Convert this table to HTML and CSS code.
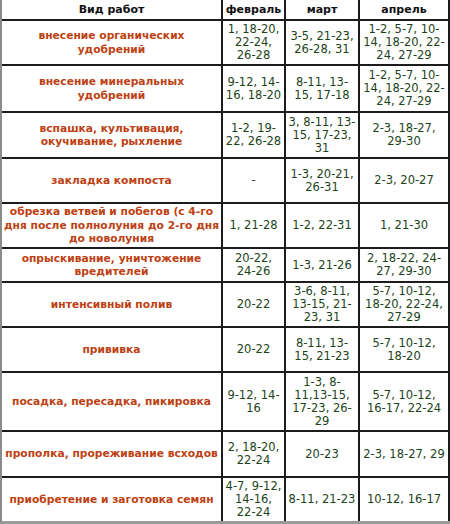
FILE: index.html
```html
<!DOCTYPE html>
<html lang="ru">
<head>
<meta charset="utf-8">
<title>Календарь работ</title>
<link rel="stylesheet" href="styles.css">
</head>
<body>
<div class="sheet">
  <div class="grid">
    <div class="cell head">Вид работ</div>
    <div class="cell head">февраль</div>
    <div class="cell head">март</div>
    <div class="cell head">апрель</div>

    <div class="cell work r1">внесение органических<br>удобрений</div>
    <div class="cell date">1, 18-20,<br>22-24,<br>26-28</div>
    <div class="cell date">3-5, 21-23,<br>26-28, 31</div>
    <div class="cell date">1-2, 5-7, 10-<br>14, 18-20, 22-<br>24, 27-29</div>

    <div class="cell work">внесение минеральных<br>удобрений</div>
    <div class="cell date">9-12, 14-<br>16, 18-20</div>
    <div class="cell date">8-11, 13-<br>15, 17-18</div>
    <div class="cell date">1-2, 5-7, 10-<br>14, 18-20, 22-<br>24, 27-29</div>

    <div class="cell work">вспашка, культивация,<br>окучивание, рыхление</div>
    <div class="cell date">1-2, 19-<br>22, 26-28</div>
    <div class="cell date">3, 8-11, 13-<br>15, 17-23,<br>31</div>
    <div class="cell date">2-3, 18-27,<br>29-30</div>

    <div class="cell work">закладка компоста</div>
    <div class="cell date">-</div>
    <div class="cell date">1-3, 20-21,<br>26-31</div>
    <div class="cell date">2-3, 20-27</div>

    <div class="cell work">обрезка ветвей и побегов (с 4-го<br>дня после полнолуния до 2-го дня<br>до новолуния</div>
    <div class="cell date">1, 21-28</div>
    <div class="cell date">1-2, 22-31</div>
    <div class="cell date">1, 21-30</div>

    <div class="cell work">опрыскивание, уничтожение<br>вредителей</div>
    <div class="cell date">20-22,<br>24-26</div>
    <div class="cell date">1-3, 21-26</div>
    <div class="cell date">2, 18-22, 24-<br>27, 29-30</div>

    <div class="cell work">интенсивный полив</div>
    <div class="cell date">20-22</div>
    <div class="cell date">3-6, 8-11,<br>13-15, 21-<br>23, 31</div>
    <div class="cell date">5-7, 10-12,<br>18-20, 22-24,<br>27-29</div>

    <div class="cell work">прививка</div>
    <div class="cell date">20-22</div>
    <div class="cell date">8-11, 13-<br>15, 21-23</div>
    <div class="cell date">5-7, 10-12,<br>18-20</div>

    <div class="cell work">посадка, пересадка, пикировка</div>
    <div class="cell date">9-12, 14-<br>16</div>
    <div class="cell date">1-3, 8-<br>11,13-15,<br>17-23, 26-<br>29</div>
    <div class="cell date">5-7, 10-12,<br>16-17, 22-24</div>

    <div class="cell work">прополка, прореживание всходов</div>
    <div class="cell date">2, 18-20,<br>22-24</div>
    <div class="cell date">20-23</div>
    <div class="cell date">2-3, 18-27, 29</div>

    <div class="cell work">приобретение и заготовка семян</div>
    <div class="cell date">4-7, 9-12,<br>14-16,<br>22-24</div>
    <div class="cell date">8-11, 21-23</div>
    <div class="cell date">10-12, 16-17</div>
  </div>
</div>
</body>
</html>
```

FILE: styles.css
```css
html, body {
  margin: 0;
  padding: 0;
  background: #ffffff;
}

.sheet {
  width: 450px;
  height: 524px;
  box-sizing: border-box;
  border-left: 2px solid #8a8a8a;
  border-bottom: 3px solid #9a9a9a;
  background: #ffffff;
}

.grid {
  display: grid;
  grid-template-columns: 219px 61px 72px 88px;
  grid-template-rows: 19px 43px 45px 44px 43px 43px 32px 43px 43px 57px 44px 43px;
  gap: 2px;
  width: 448px;
  height: 521px;
  box-sizing: border-box;
  padding-right: 2px;
  background: #1c1c1c;
}

.cell {
  background: #ffffff;
  display: flex;
  align-items: center;
  justify-content: center;
  text-align: center;
  font-family: "DejaVu Sans", Verdana, sans-serif;
  white-space: nowrap;
}

.head {
  font-weight: bold;
  font-size: 11px;
  color: #111111;
}

.work {
  font-weight: bold;
  font-size: 10.7px;
  line-height: 13.5px;
  color: #bd4112;
}

.date {
  font-size: 11.5px;
  line-height: 13px;
  color: #1c431a;
}
```
